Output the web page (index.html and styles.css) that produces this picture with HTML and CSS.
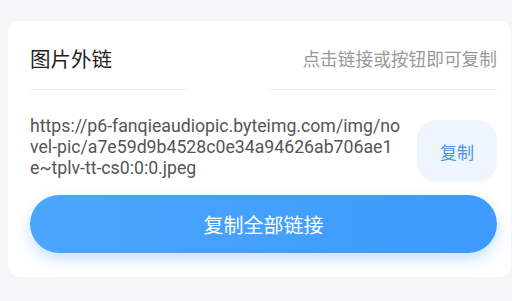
FILE: index.html
```
<!doctype html>
<html>
<head>
<title>图片外链</title>
<meta charset="utf-8">
<link rel="stylesheet" href="styles.css">
</head>
	<body>
		<div class="card">
			<div class="card-head">
				<span class="card-title">图片外链</span>
				<span class="card-tip">点击链接或按钮即可复制</span>
				<i class="head-notch"></i>
			</div>
			<div class="link-row">
				<div class="link-url">https://p6-fanqieaudiopic.byteimg.com/img/novel-pic/a7e59d9b4528c0e34a94626ab706ae1e~tplv-tt-cs0:0:0.jpeg</div>
				<button class="link-copy">复制</button>
			</div>
			<button class="copy-all">复制全部链接</button>
		</div>
	</body>
</html>
```

FILE: styles.css
```
body {
	margin: 0;
	padding: 21px 1px 24px 8px;
	background: #f5f6f8;
	font-family: Roboto, "Noto Sans CJK SC", sans-serif;
}
.card {
	background: #fff;
	border-radius: 12px;
	padding: 0 14px 24px 22px;
}
.card-head {
	position: relative;
	display: flex;
	justify-content: space-between;
	align-items: center;
	padding: 25px 0 15px;
	line-height: 28px;
	border-bottom: 1px solid #f0f1f3;
}
.card-title {
	font-size: 20.5px;
	color: #222;
}
.card-tip {
	font-size: 17.7px;
	color: #999;
}
/* 分隔线上的白色小块 */
.head-notch {
	position: absolute;
	left: 160px;
	bottom: -8px;
	width: 78px;
	height: 14px;
	background: #fff;
	border-radius: 6px;
}
.link-row {
	display: flex;
	align-items: flex-start;
	gap: 16.5px;
	padding-top: 26px;
}
.link-url {
	flex: 1;
	font-size: 17.7px;
	line-height: 21px;
	color: #555;
	word-break: break-all;
}
.link-copy {
	flex: none;
	width: 80px;
	height: 62px;
	margin-top: 4px;
	border: 0;
	border-radius: 20px;
	background: #eef5ff;
	color: #4a93e6;
	font-family: inherit;
	font-size: 17px;
}
.copy-all {
	display: block;
	width: 100%;
	height: 58px;
	margin-top: 13px;
	border: 0;
	border-radius: 29px;
	background: linear-gradient(90deg, #4aa6fc, #3e9afd);
	box-shadow: 0 6px 14px rgba(64, 158, 255, .3);
	color: #fff;
	font-family: inherit;
	font-size: 20px;
}
```
